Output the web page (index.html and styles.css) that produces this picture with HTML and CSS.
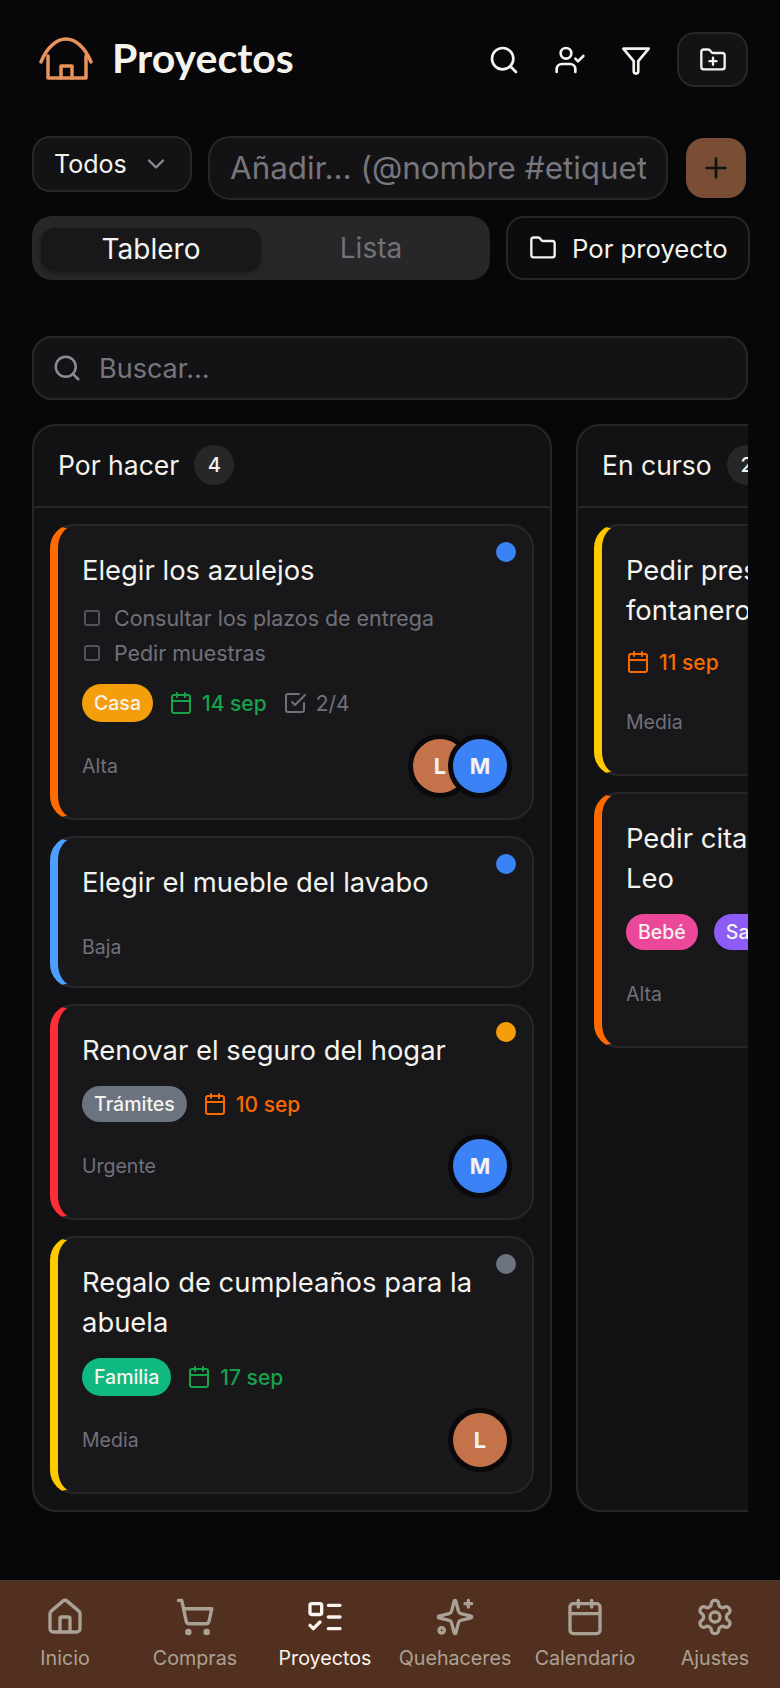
FILE: index.html
```html
<!DOCTYPE html>
<html lang="es">
<head>
<meta charset="utf-8">
<title>Proyectos</title>
<link rel="stylesheet" href="styles.css">
</head>
<body>
<svg class="sprite" aria-hidden="true">
  <symbol id="i-search" viewBox="0 0 24 24"><circle cx="11" cy="11" r="8"/><path d="m21 21-4.3-4.3"/></symbol>
  <symbol id="i-user-check" viewBox="0 0 24 24"><path d="M16 21v-2a4 4 0 0 0-4-4H6a4 4 0 0 0-4 4v2"/><circle cx="9" cy="7" r="4"/><path d="m16 11 2 2 4-4"/></symbol>
  <symbol id="i-funnel" viewBox="0 0 24 24"><path d="M2.5 3.5h19l-7.8 9.3v7.7a1.7 1.7 0 0 1-3.4 0v-7.7z"/></symbol>
  <symbol id="i-folder" viewBox="0 0 24 24"><path d="M20 20a2 2 0 0 0 2-2V8a2 2 0 0 0-2-2h-7.9a2 2 0 0 1-1.69-.9L9.6 3.9A2 2 0 0 0 7.93 3H4a2 2 0 0 0-2 2v13a2 2 0 0 0 2 2Z"/></symbol>
  <symbol id="i-folder-plus" viewBox="0 0 24 24"><path d="M20 20a2 2 0 0 0 2-2V8a2 2 0 0 0-2-2h-7.9a2 2 0 0 1-1.69-.9L9.6 3.9A2 2 0 0 0 7.93 3H4a2 2 0 0 0-2 2v13a2 2 0 0 0 2 2Z"/><path d="M12 10v6M9 13h6"/></symbol>
  <symbol id="i-chevron" viewBox="0 0 24 24"><path d="m6 9 6 6 6-6"/></symbol>
  <symbol id="i-plus" viewBox="0 0 24 24"><path d="M5 12h14M12 5v14"/></symbol>
  <symbol id="i-calendar" viewBox="0 0 24 24"><rect x="3" y="4" width="18" height="18" rx="2"/><path d="M16 2v4M8 2v4M3 10h18"/></symbol>
  <symbol id="i-check" viewBox="0 0 24 24"><path d="m9 11 3 3L22 4"/><path d="M21 12v7a2 2 0 0 1-2 2H5a2 2 0 0 1-2-2V5a2 2 0 0 1 2-2h11"/></symbol>
  <symbol id="i-home" viewBox="0 0 24 24"><path d="M15 21v-8a1 1 0 0 0-1-1h-4a1 1 0 0 0-1 1v8"/><path d="M3 10a2 2 0 0 1 .709-1.528l7-5.999a2 2 0 0 1 2.582 0l7 5.999A2 2 0 0 1 21 10v9a2 2 0 0 1-2 2H5a2 2 0 0 1-2-2z"/></symbol>
  <symbol id="i-cart" viewBox="0 0 24 24"><circle cx="8" cy="21" r="1"/><circle cx="19" cy="21" r="1"/><path d="M2.05 2.05h2l2.66 12.42a2 2 0 0 0 2 1.58h9.78a2 2 0 0 0 1.95-1.57l1.65-7.43H5.12"/></symbol>
  <symbol id="i-list" viewBox="0 0 24 24"><rect x="3" y="4" width="7" height="6.5" rx="1"/><path d="m3 17 2 2 4-4M14 5h7M14 12h7M14 19h7"/></symbol>
  <symbol id="i-sparkles" viewBox="0 0 24 24"><path d="M9.937 15.5A2 2 0 0 0 8.5 14.063l-6.135-1.582a.5.5 0 0 1 0-.962L8.5 9.936A2 2 0 0 0 9.937 8.5l1.582-6.135a.5.5 0 0 1 .963 0L14.063 8.5A2 2 0 0 0 15.5 9.937l6.135 1.581a.5.5 0 0 1 0 .964L15.5 14.063a2 2 0 0 0-1.437 1.437l-1.582 6.135a.5.5 0 0 1-.963 0z"/><path d="M20 2v4M22 4h-4"/><circle cx="4" cy="20" r="1.6"/></symbol>
  <symbol id="i-gear" viewBox="0 0 24 24"><path d="M12.22 2h-.44a2 2 0 0 0-2 2v.18a2 2 0 0 1-1 1.73l-.43.25a2 2 0 0 1-2 0l-.15-.08a2 2 0 0 0-2.73.73l-.22.38a2 2 0 0 0 .73 2.73l.15.1a2 2 0 0 1 1 1.72v.51a2 2 0 0 1-1 1.74l-.15.09a2 2 0 0 0-.73 2.73l.22.38a2 2 0 0 0 2.73.73l.15-.08a2 2 0 0 1 2 0l.43.25a2 2 0 0 1 1 1.73V20a2 2 0 0 0 2 2h.44a2 2 0 0 0 2-2v-.18a2 2 0 0 1 1-1.73l.43-.25a2 2 0 0 1 2 0l.15.08a2 2 0 0 0 2.73-.73l.22-.39a2 2 0 0 0-.73-2.73l-.15-.08a2 2 0 0 1-1-1.74v-.5a2 2 0 0 1 1-1.74l.15-.09a2 2 0 0 0 .73-2.73l-.22-.38a2 2 0 0 0-2.73-.73l-.15.08a2 2 0 0 1-2 0l-.43-.25a2 2 0 0 1-1-1.73V4a2 2 0 0 0-2-2z"/><circle cx="12" cy="12" r="3"/></symbol>
</svg>

<div class="app">
  <main class="main">
    <header class="header">
      <div class="brand">
        <svg class="logo" viewBox="0 0 56 46"><path d="M2 25C8 10 18 2 27 2s19 8 25 23"/><path d="M9 19v22h38V19"/><path d="M22 41V29h11v12"/></svg>
        <h1 class="page-title">Proyectos</h1>
      </div>
      <div class="actions">
        <svg class="icon icon-32"><use href="#i-search"/></svg>
        <svg class="icon icon-32"><use href="#i-user-check"/></svg>
        <svg class="icon icon-32"><use href="#i-funnel"/></svg>
        <button class="box-btn" type="button"><svg class="icon icon-28"><use href="#i-folder-plus"/></svg></button>
      </div>
    </header>

    <div class="add-row">
      <button class="select" type="button"><span>Todos</span><svg class="icon icon-28 icon-dim"><use href="#i-chevron"/></svg></button>
      <input class="add-input" type="text" placeholder="Añadir… (@nombre #etiqueta)">
      <button class="add-btn" type="button"><svg class="icon icon-32"><use href="#i-plus"/></svg></button>
    </div>

    <div class="view-row">
      <div class="segmented">
        <div class="seg seg-active">Tablero</div>
        <div class="seg">Lista</div>
      </div>
      <button class="group-btn" type="button"><svg class="icon icon-28"><use href="#i-folder"/></svg><span>Por proyecto</span></button>
    </div>

    <div class="search">
      <svg class="icon icon-30 icon-dim"><use href="#i-search"/></svg>
      <input class="search-input" type="text" placeholder="Buscar…">
    </div>

    <div class="board">
      <section class="column">
        <div class="col-head"><h2 class="col-title">Por hacer</h2><span class="count">4</span></div>
        <div class="col-body">
          <article class="card border-high">
            <span class="dot dot-blue"></span>
            <h3 class="card-title">Elegir los azulejos</h3>
            <ul class="subtasks">
              <li class="subtask"><span class="box"></span>Consultar los plazos de entrega</li>
              <li class="subtask"><span class="box"></span>Pedir muestras</li>
            </ul>
            <div class="meta meta-tight">
              <span class="tag tag-amber">Casa</span>
              <span class="date date-green"><svg class="icon icon-24"><use href="#i-calendar"/></svg>14 sep</span>
              <span class="date date-muted"><svg class="icon icon-24"><use href="#i-check"/></svg>2/4</span>
            </div>
            <div class="card-foot">
              <span class="priority">Alta</span>
              <div class="avatars"><span class="avatar av-l">L</span><span class="avatar av-m">M</span></div>
            </div>
          </article>

          <article class="card border-low">
            <span class="dot dot-blue"></span>
            <h3 class="card-title">Elegir el mueble del lavabo</h3>
            <div class="card-foot card-foot-plain"><span class="priority">Baja</span></div>
          </article>

          <article class="card border-urgent">
            <span class="dot dot-amber"></span>
            <h3 class="card-title">Renovar el seguro del hogar</h3>
            <div class="meta">
              <span class="tag tag-gray tag-short">Trámites</span>
              <span class="date date-orange"><svg class="icon icon-24"><use href="#i-calendar"/></svg>10 sep</span>
            </div>
            <div class="card-foot">
              <span class="priority">Urgente</span>
              <div class="avatars"><span class="avatar av-m">M</span></div>
            </div>
          </article>

          <article class="card border-mid">
            <span class="dot dot-gray"></span>
            <h3 class="card-title">Regalo de cumpleaños para la abuela</h3>
            <div class="meta">
              <span class="tag tag-green">Familia</span>
              <span class="date date-green"><svg class="icon icon-24"><use href="#i-calendar"/></svg>17 sep</span>
            </div>
            <div class="card-foot">
              <span class="priority">Media</span>
              <div class="avatars"><span class="avatar av-l">L</span></div>
            </div>
          </article>
        </div>
      </section>

      <section class="column">
        <div class="col-head"><h2 class="col-title">En curso</h2><span class="count">2</span></div>
        <div class="col-body">
          <article class="card border-mid">
            <span class="dot dot-blue"></span>
            <h3 class="card-title">Pedir presupuesto al<br>fontanero</h3>
            <div class="meta">
              <span class="date date-orange"><svg class="icon icon-24"><use href="#i-calendar"/></svg>11 sep</span>
            </div>
            <div class="card-foot">
              <span class="priority">Media</span>
              <div class="avatars"><span class="avatar av-m">M</span></div>
            </div>
          </article>

          <article class="card border-high">
            <span class="dot dot-amber"></span>
            <h3 class="card-title">Pedir cita con la pediatra para Leo</h3>
            <div class="meta">
              <span class="tag tag-pink tag-short">Bebé</span>
              <span class="tag tag-violet tag-short">Salud</span>
            </div>
            <div class="card-foot">
              <span class="priority">Alta</span>
              <div class="avatars"><span class="avatar av-l">L</span></div>
            </div>
          </article>
        </div>
      </section>
    </div>
  </main>

  <nav class="nav">
    <a class="nav-item"><svg class="icon nav-icon"><use href="#i-home"/></svg><span>Inicio</span></a>
    <a class="nav-item"><svg class="icon nav-icon"><use href="#i-cart"/></svg><span>Compras</span></a>
    <a class="nav-item nav-active"><svg class="icon nav-icon"><use href="#i-list"/></svg><span>Proyectos</span></a>
    <a class="nav-item"><svg class="icon nav-icon"><use href="#i-sparkles"/></svg><span>Quehaceres</span></a>
    <a class="nav-item"><svg class="icon nav-icon"><use href="#i-calendar"/></svg><span>Calendario</span></a>
    <a class="nav-item"><svg class="icon nav-icon"><use href="#i-gear"/></svg><span>Ajustes</span></a>
  </nav>
</div>
</body>
</html>
```
FILE: styles.css
```css
* { box-sizing: border-box; }

html, body { margin: 0; height: 100%; }

body {
  background: #070709;
  color: #f5f3ee;
  font-family: "Inter", "Noto Sans", sans-serif;
}

.sprite { display: none; }

h1, h2, h3, ul { margin: 0; padding: 0; font: inherit; list-style: none; }

button { font: inherit; color: inherit; cursor: pointer; }

.icon {
  flex: none;
  display: block;
  fill: none;
  stroke: currentColor;
  stroke-width: 2;
  stroke-linecap: round;
  stroke-linejoin: round;
}
.icon-24 { width: 24px; height: 24px; }
.icon-28 { width: 28px; height: 28px; }
.icon-30 { width: 30px; height: 30px; }
.icon-32 { width: 32px; height: 32px; }
.icon-dim { color: #8b8b92; }

.app { height: 1688px; display: flex; flex-direction: column; overflow: hidden; }

.main { flex: 1; min-height: 0; padding: 32px 32px 0; }

/* Header */
.header { display: flex; align-items: center; justify-content: space-between; height: 55px; }
.brand { display: flex; align-items: center; gap: 17px; margin-top: -5px; }
.logo {
  width: 56px; height: 46px; margin-left: 7px; margin-top: 5px;
  fill: none; stroke: #e8935c; stroke-width: 3.5; stroke-linecap: round; stroke-linejoin: round;
}
.page-title { font-family: "Lato", sans-serif; font-weight: 700; font-size: 41px; line-height: 55px; }
.actions { display: flex; align-items: center; gap: 34px; }
.box-btn {
  width: 71px; height: 55px; margin-left: -9px;
  display: flex; align-items: center; justify-content: center;
  background: #131315; border: 2px solid #27272a; border-radius: 18px;
}

/* Add row */
.add-row { display: flex; align-items: flex-start; gap: 16px; margin-top: 49px; }
.select {
  flex: none; width: 160px; height: 56px; padding: 0 20px 0 20px;
  display: flex; align-items: center; justify-content: space-between;
  background: #131315; border: 2px solid #27272a; border-radius: 18px;
  font-size: 25px;
}
.add-input {
  flex: 1; min-width: 0; height: 64px; padding: 0 20px;
  background: #131315; border: 2px solid #27272a; border-radius: 22px;
  color: #f5f3ee; font: inherit; font-size: 31.4px; outline: none;
}
.add-input::placeholder, .search-input::placeholder { color: #77767d; opacity: 1; }
.add-btn {
  flex: none; width: 60px; height: 60px; margin: 2px 2px 0;
  display: flex; align-items: center; justify-content: center;
  background: #7a4e35; border: 0; border-radius: 18px; color: #111;
}

/* View row */
.view-row { display: flex; gap: 16px; margin-top: 16px; }
.segmented {
  flex: none; width: 458px; height: 64px; padding: 12px 9px 9px;
  display: flex; background: #27272a; border-radius: 20px;
}
.seg {
  flex: 1; display: flex; align-items: center; justify-content: center;
  margin-top: -3px; font-size: 28px; color: #71717a;
}
.seg-active {
  margin-top: 0; padding-bottom: 2px; background: #18181b; border-radius: 14px; color: #f5f3ee;
  box-shadow: 0 2px 4px rgba(0, 0, 0, .35);
}
.group-btn {
  flex: 1; height: 64px; padding: 0 20px 0 21px;
  display: flex; align-items: center; gap: 15px;
  background: #0c0c0e; border: 2px solid #27272a; border-radius: 18px;
  font-size: 25.7px; white-space: nowrap;
}

/* Search */
.search {
  height: 64px; margin-top: 56px; padding: 0 18px;
  display: flex; align-items: center; gap: 17px;
  background: #131315; border: 2px solid #27272a; border-radius: 20px;
}
.search-input {
  flex: 1; min-width: 0; height: 100%; padding: 0;
  background: transparent; border: 0; outline: none;
  color: #f5f3ee; font: inherit; font-size: 27px;
}

/* Board */
.board { display: flex; gap: 24px; margin-top: 24px; overflow: hidden; }
.column {
  flex: 0 0 520px;
  background: #121214; border: 2px solid #27272a; border-radius: 24px;
}
.col-head {
  height: 83px; padding: 0 24px 2px; margin-top: -1px;
  display: flex; align-items: center; gap: 15px;
  border-bottom: 2px solid #27272a;
}
.col-title { font-size: 26.5px; font-weight: 400; }
.count {
  width: 40px; height: 40px; border-radius: 50%;
  display: flex; align-items: center; justify-content: center;
  background: #27272a; font-size: 20px; font-weight: 500;
}
.col-body { padding: 16px; display: flex; flex-direction: column; gap: 16px; }

/* Card */
.card {
  position: relative;
  padding: 24px 20px 20px 24px;
  background: #18181b;
  border: 2px solid #27272a;
  border-left-width: 8px;
  border-radius: 24px;
}
.border-high { border-left-color: #ff6b00; }
.border-low { border-left-color: #4d9fff; }
.border-urgent { border-left-color: #ff2d37; }
.border-mid { border-left-color: #ffc800; }

.dot { position: absolute; top: 16px; right: 16px; width: 20px; height: 20px; border-radius: 50%; }
.dot-blue { background: #3b82f6; }
.dot-amber { background: #f59e0b; }
.dot-gray { background: #6b7280; }

.card-title { font-size: 27.4px; line-height: 40px; font-weight: 400; }

.subtasks { margin-top: 10px; }
.subtask {
  height: 35px; display: flex; align-items: center; gap: 14px; margin-left: 2px;
  color: #71717a; font-size: 21.4px;
}
.box { flex: none; width: 16px; height: 16px; border: 2px solid #52525b; border-radius: 3px; }

.meta { display: flex; align-items: center; gap: 16px; margin-top: 16px; }
.meta-tight { margin-top: 14px; }
.tag {
  height: 38px; padding: 0 12px; border-radius: 19px;
  display: flex; align-items: center; color: #f5f3ee; font-size: 19.5px; font-weight: 500;
}
.tag-short { height: 36px; }
.tag-amber { background: #f59e0b; }
.tag-gray { background: #6b7280; }
.tag-green { background: #10b981; }
.tag-pink { background: #ec4899; }
.tag-violet { background: #8b5cf6; }

.date { display: flex; align-items: center; gap: 9px; height: 32px; font-size: 21px; font-weight: 500; }
.date-green { color: #16a34a; }
.date-orange { color: #f96a00; }
.date-muted { color: #71717a; font-weight: 400; }

.card-foot { display: flex; align-items: center; justify-content: space-between; margin-top: 12px; }
.card-foot-plain { height: 38px; margin-top: 26px; }
.priority { color: #71717a; font-size: 19.5px; }
.avatars { display: flex; }
.avatar {
  width: 64px; height: 64px; border-radius: 50%;
  display: flex; align-items: center; justify-content: center;
  border: 5px solid #0a0a0c; color: #f5f3ee; font-size: 22px; font-weight: 700;
}
.avatar + .avatar { margin-left: -24px; }
.av-l { background: #c4724a; }
.av-m { background: #3b82f6; }

/* Bottom nav */
.nav {
  flex: none; height: 108px; padding-top: 16px;
  display: grid; grid-template-columns: repeat(6, 130px);
  background: #52301f; border-top: 1px solid #4a3a30;
}
.nav-item { display: flex; flex-direction: column; align-items: center; color: #aaa196; font-size: 19.7px; }
.nav-icon { width: 40px; height: 40px; margin-bottom: 9px; }
.nav-active { color: #f8f4ee; }
```
